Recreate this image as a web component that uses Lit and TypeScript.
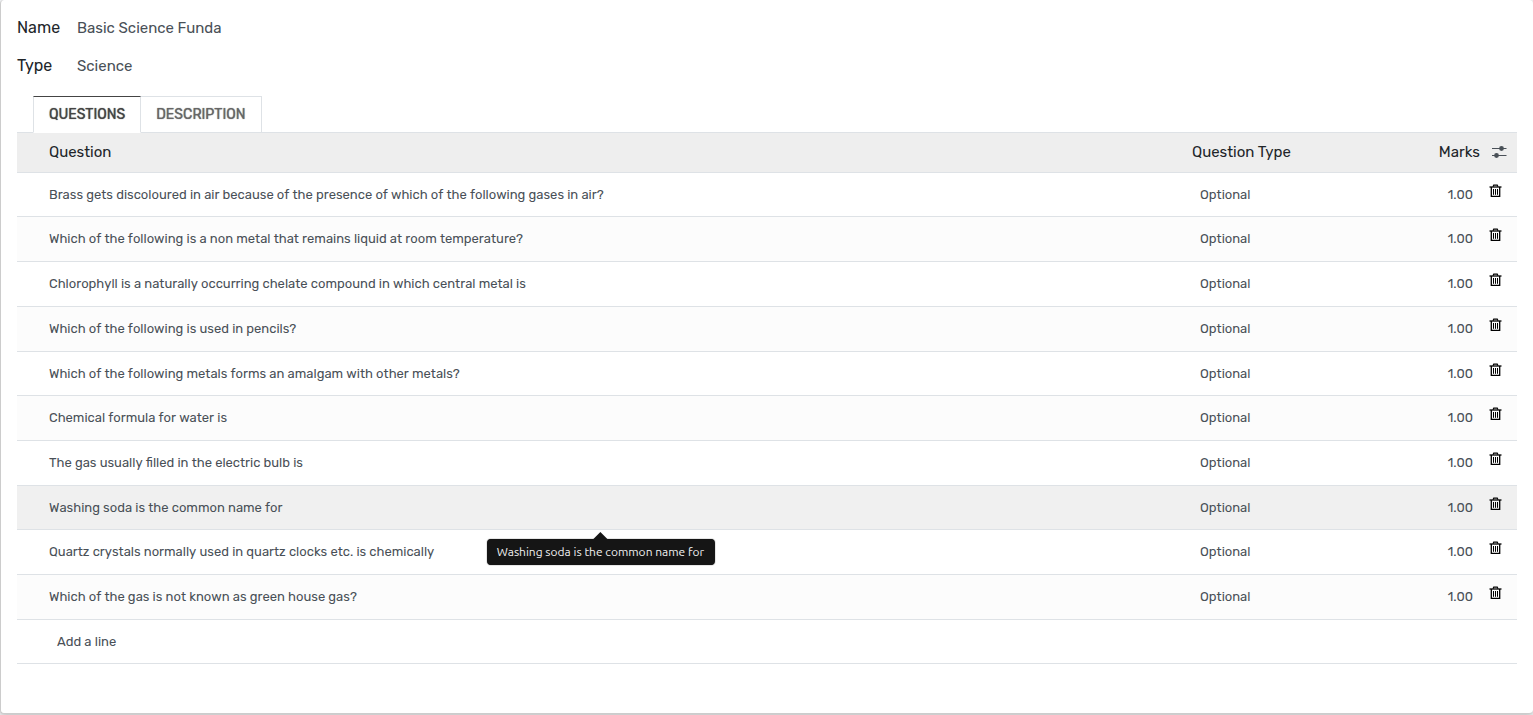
import { LitElement, html, css } from "lit";
import { customElement, property, state } from "lit/decorators.js";
import { classMap } from "lit/directives/class-map.js";

interface Question {
  text: string;
  type: string;
  marks: number;
}

const QUESTIONS: Question[] = [
  "Brass gets discoloured in air because of the presence of which of the following gases in air?",
  "Which of the following is a non metal that remains liquid at room temperature?",
  "Chlorophyll is a naturally occurring chelate compound in which central metal is",
  "Which of the following is used in pencils?",
  "Which of the following metals forms an amalgam with other metals?",
  "Chemical formula for water is",
  "The gas usually filled in the electric bulb is",
  "Washing soda is the common name for",
  "Quartz crystals normally used in quartz clocks etc. is chemically",
  "Which of the gas is not known as green house gas?",
].map((text) => ({ text, type: "Optional", marks: 1 }));

const trashIcon = html`<svg class="icon" width="13" height="14" viewBox="0 0 13 14" fill="none" stroke="currentColor" aria-hidden="true">
  <path d="M0.5 3H12.5" stroke-width="1.3" />
  <path d="M4 2.7L4.7 1.1H8.3L9 2.7" stroke-width="1.1" />
  <path d="M2.3 3V12.4H10.7V3" stroke-width="1.3" />
  <path d="M4.5 5V10.8M6.5 5V10.8M8.5 5V10.8" stroke-width="1" />
</svg>`;

const slidersIcon = html`<svg class="icon" width="16" height="14" viewBox="0 0 16 14" stroke="currentColor" aria-hidden="true">
  <path d="M1 2.5H15.5M1 9.5H15.5" stroke-width="1.2" />
  <circle cx="10.5" cy="2.5" r="2.4" fill="currentColor" stroke="none" />
  <circle cx="5.5" cy="9.5" r="2.4" fill="currentColor" stroke="none" />
</svg>`;

@customElement("question-table")
class QuestionTable extends LitElement {
  @property({ attribute: false }) rows: Question[] = [];
  @property({ type: Number }) active = -1;

  static styles = css`
    :host {
      display: block;
    }
    .table {
      width: 100%;
      table-layout: fixed;
      border-collapse: separate;
      border-spacing: 0;
      color: #495057;
      font-size: 13px;
      line-height: 16px;
    }
    .col-type {
      width: 200px;
    }
    .col-marks {
      width: 104px;
    }
    .col-action {
      width: 29px;
    }
    .head th {
      padding: 10px 8px 11px;
      background: #eee;
      border-bottom: 1px solid #dee2e6;
      color: #212529;
      font-size: 15px;
      line-height: 18px;
      font-weight: 400;
      text-align: left;
    }
    .row td {
      padding: 14px 16px;
      border-bottom: 1px solid #dee2e6;
      vertical-align: top;
      font-kerning: none;
    }
    .row:first-child td,
    .row:nth-child(3n + 5) td {
      padding-bottom: 13px;
    }
    .row:nth-child(even) td {
      background: #fcfcfc;
    }
    .row.active td {
      background: #f0f0f0;
    }
    .row.add td {
      background: none;
      padding-left: 40px;
    }
    .head .question,
    .row .question {
      padding-left: 32px;
    }
    .head .marks,
    .row .marks {
      text-align: right;
    }
    .row .marks {
      padding-right: 15px;
    }
    .head .action,
    .row .action {
      padding: 0;
    }
    .button {
      display: block;
      margin: 0;
      padding: 0;
      border: 0;
      background: none;
      color: inherit;
      font: inherit;
      cursor: pointer;
    }
    .options {
      margin-left: 3px;
      color: #495057;
    }
    .remove {
      margin: 11px 0 0 1px;
      color: #000;
    }
    .icon {
      display: block;
    }
    .cell {
      position: relative;
    }
    .tooltip {
      position: absolute;
      top: 53px;
      left: 50%;
      transform: translateX(-50%);
      padding: 0 10px;
      border-radius: 4px;
      background: #151515;
      box-shadow: 0 0 1px #000;
      color: #f0f0f0;
      font: 12px/26px Ubuntu, "Noto Sans", sans-serif;
      white-space: nowrap;
      z-index: 1;
    }
    .tooltip::before {
      content: "";
      position: absolute;
      bottom: 100%;
      left: 50%;
      margin-left: -7px;
      border: 7px solid transparent;
      border-top-width: 0;
      border-bottom-color: #151515;
    }
  `;

  render() {
    return html`
      <table class="table">
        <colgroup>
          <col />
          <col class="col-type" />
          <col class="col-marks" />
          <col class="col-action" />
        </colgroup>
        <thead>
          <tr class="head">
            <th class="question" scope="col">Question</th>
            <th scope="col">Question Type</th>
            <th class="marks" scope="col">Marks</th>
            <th class="action" scope="col">
              <button class="button options" type="button" aria-label="Optional columns">${slidersIcon}</button>
            </th>
          </tr>
        </thead>
        <tbody>
          ${this.rows.map(
            (q, i) => html`<tr class=${classMap({ row: true, active: i === this.active })}>
              <td class="question cell">
                ${q.text}${i === this.active ? html`<span class="tooltip" role="tooltip">${q.text}</span>` : null}
              </td>
              <td>${q.type}</td>
              <td class="marks">${q.marks.toFixed(2)}</td>
              <td class="action">
                <button class="button remove" type="button" aria-label="Delete row">${trashIcon}</button>
              </td>
            </tr>`
          )}
          <tr class="row add">
            <td colspan="4"><button class="button" type="button">Add a line</button></td>
          </tr>
        </tbody>
      </table>
    `;
  }
}

@customElement("app-root")
class AppRoot extends LitElement {
  @state() private tab = "Questions";

  static styles = css`
    :host {
      display: block;
      min-height: 100vh;
      background: #f4f6f8;
      font-family: Rubik, Roboto, sans-serif;
    }
    .sheet {
      padding: 9px 16px 49px;
      border: 1px solid #ccc;
      border-top: 0;
      border-right: 0;
      border-radius: 4px;
      background: #fff;
      box-shadow: 0 2px 6px #bbb;
    }
    .fields {
      display: grid;
      grid-template-columns: 60px 1fr;
      align-items: center;
      margin: 0;
    }
    .label,
    .value {
      margin: 0;
      line-height: 38px;
    }
    .label {
      color: #212529;
      font-size: 16px;
    }
    .value {
      color: #495057;
      font-size: 15px;
    }
    .tabs {
      display: flex;
      margin-top: 11px;
      padding-left: 16px;
      border-bottom: 1px solid #dee2e6;
    }
    .tab {
      margin: 0 0 -1px -1px;
      padding: 0 15px;
      border: 1px solid #dee2e6;
      background: #fff;
      color: #666;
      font: 400 14px/35px Rubik, Roboto, sans-serif;
      text-shadow: 0 0 1px currentColor;
      text-transform: uppercase;
      cursor: pointer;
    }
    .tab:first-child {
      margin-left: 0;
    }
    .tab.selected {
      position: relative;
      border-top-color: #444;
      border-bottom-color: #fff;
      color: #444;
    }
  `;

  render() {
    return html`
      <main class="sheet">
        <dl class="fields">
          <dt class="label">Name</dt>
          <dd class="value">Basic Science Funda</dd>
          <dt class="label">Type</dt>
          <dd class="value">Science</dd>
        </dl>
        <div class="tabs" role="tablist">
          ${["Questions", "Description"].map(
            (name) => html`<button
              class=${classMap({ tab: true, selected: name === this.tab })}
              type="button"
              role="tab"
              aria-selected=${name === this.tab}
              @click=${() => (this.tab = name)}
            >${name}</button>`
          )}
        </div>
        ${this.tab === "Questions" ? html`<question-table .rows=${QUESTIONS} .active=${7}></question-table>` : null}
      </main>
    `;
  }
}
